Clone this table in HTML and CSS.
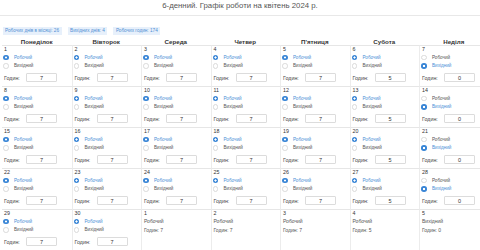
FILE: index.html
```html
<!DOCTYPE html>
<html lang="uk">
<head>
<meta charset="utf-8">
<title>Графік роботи</title>
<link rel="stylesheet" href="styles.css">
</head>
<body>
<h1 class="title">6-денний. Графік роботи на квітень 2024 р.</h1>
<div class="badges">
  <span class="badge">Робочих днів в місяці: 26</span>
  <span class="badge">Вихідних днів: 4</span>
  <span class="badge">Робочих годин: 174</span>
</div>
<div class="head">
  <div>Понеділок</div><div>Вівторок</div><div>Середа</div><div>Четвер</div><div>П'ятниця</div><div>Субота</div><div>Неділя</div>
</div>
<div class="grid">
  <div class="cell"><div class="num">1</div><label class="opt on"><input type="radio" name="d1" checked><span>Робочий</span></label><label class="opt"><input type="radio" name="d1"><span>Вихідний</span></label><div class="hrs"><span class="hl">Годин:</span><input class="hin" value="7"></div></div>
  <div class="cell"><div class="num">2</div><label class="opt on"><input type="radio" name="d2" checked><span>Робочий</span></label><label class="opt"><input type="radio" name="d2"><span>Вихідний</span></label><div class="hrs"><span class="hl">Годин:</span><input class="hin" value="7"></div></div>
  <div class="cell"><div class="num">3</div><label class="opt on"><input type="radio" name="d3" checked><span>Робочий</span></label><label class="opt"><input type="radio" name="d3"><span>Вихідний</span></label><div class="hrs"><span class="hl">Годин:</span><input class="hin" value="7"></div></div>
  <div class="cell"><div class="num">4</div><label class="opt on"><input type="radio" name="d4" checked><span>Робочий</span></label><label class="opt"><input type="radio" name="d4"><span>Вихідний</span></label><div class="hrs"><span class="hl">Годин:</span><input class="hin" value="7"></div></div>
  <div class="cell"><div class="num">5</div><label class="opt on"><input type="radio" name="d5" checked><span>Робочий</span></label><label class="opt"><input type="radio" name="d5"><span>Вихідний</span></label><div class="hrs"><span class="hl">Годин:</span><input class="hin" value="7"></div></div>
  <div class="cell"><div class="num">6</div><label class="opt on"><input type="radio" name="d6" checked><span>Робочий</span></label><label class="opt"><input type="radio" name="d6"><span>Вихідний</span></label><div class="hrs"><span class="hl">Годин:</span><input class="hin" value="5"></div></div>
  <div class="cell"><div class="num">7</div><label class="opt"><input type="radio" name="d7"><span>Робочий</span></label><label class="opt on"><input type="radio" name="d7" checked><span>Вихідний</span></label><div class="hrs"><span class="hl">Годин:</span><input class="hin" value="0"></div></div>

  <div class="cell"><div class="num">8</div><label class="opt on"><input type="radio" name="d8" checked><span>Робочий</span></label><label class="opt"><input type="radio" name="d8"><span>Вихідний</span></label><div class="hrs"><span class="hl">Годин:</span><input class="hin" value="7"></div></div>
  <div class="cell"><div class="num">9</div><label class="opt on"><input type="radio" name="d9" checked><span>Робочий</span></label><label class="opt"><input type="radio" name="d9"><span>Вихідний</span></label><div class="hrs"><span class="hl">Годин:</span><input class="hin" value="7"></div></div>
  <div class="cell"><div class="num">10</div><label class="opt on"><input type="radio" name="d10" checked><span>Робочий</span></label><label class="opt"><input type="radio" name="d10"><span>Вихідний</span></label><div class="hrs"><span class="hl">Годин:</span><input class="hin" value="7"></div></div>
  <div class="cell"><div class="num">11</div><label class="opt on"><input type="radio" name="d11" checked><span>Робочий</span></label><label class="opt"><input type="radio" name="d11"><span>Вихідний</span></label><div class="hrs"><span class="hl">Годин:</span><input class="hin" value="7"></div></div>
  <div class="cell"><div class="num">12</div><label class="opt on"><input type="radio" name="d12" checked><span>Робочий</span></label><label class="opt"><input type="radio" name="d12"><span>Вихідний</span></label><div class="hrs"><span class="hl">Годин:</span><input class="hin" value="7"></div></div>
  <div class="cell"><div class="num">13</div><label class="opt on"><input type="radio" name="d13" checked><span>Робочий</span></label><label class="opt"><input type="radio" name="d13"><span>Вихідний</span></label><div class="hrs"><span class="hl">Годин:</span><input class="hin" value="5"></div></div>
  <div class="cell"><div class="num">14</div><label class="opt"><input type="radio" name="d14"><span>Робочий</span></label><label class="opt on"><input type="radio" name="d14" checked><span>Вихідний</span></label><div class="hrs"><span class="hl">Годин:</span><input class="hin" value="0"></div></div>

  <div class="cell"><div class="num">15</div><label class="opt on"><input type="radio" name="d15" checked><span>Робочий</span></label><label class="opt"><input type="radio" name="d15"><span>Вихідний</span></label><div class="hrs"><span class="hl">Годин:</span><input class="hin" value="7"></div></div>
  <div class="cell"><div class="num">16</div><label class="opt on"><input type="radio" name="d16" checked><span>Робочий</span></label><label class="opt"><input type="radio" name="d16"><span>Вихідний</span></label><div class="hrs"><span class="hl">Годин:</span><input class="hin" value="7"></div></div>
  <div class="cell"><div class="num">17</div><label class="opt on"><input type="radio" name="d17" checked><span>Робочий</span></label><label class="opt"><input type="radio" name="d17"><span>Вихідний</span></label><div class="hrs"><span class="hl">Годин:</span><input class="hin" value="7"></div></div>
  <div class="cell"><div class="num">18</div><label class="opt on"><input type="radio" name="d18" checked><span>Робочий</span></label><label class="opt"><input type="radio" name="d18"><span>Вихідний</span></label><div class="hrs"><span class="hl">Годин:</span><input class="hin" value="7"></div></div>
  <div class="cell"><div class="num">19</div><label class="opt on"><input type="radio" name="d19" checked><span>Робочий</span></label><label class="opt"><input type="radio" name="d19"><span>Вихідний</span></label><div class="hrs"><span class="hl">Годин:</span><input class="hin" value="7"></div></div>
  <div class="cell"><div class="num">20</div><label class="opt on"><input type="radio" name="d20" checked><span>Робочий</span></label><label class="opt"><input type="radio" name="d20"><span>Вихідний</span></label><div class="hrs"><span class="hl">Годин:</span><input class="hin" value="5"></div></div>
  <div class="cell"><div class="num">21</div><label class="opt"><input type="radio" name="d21"><span>Робочий</span></label><label class="opt on"><input type="radio" name="d21" checked><span>Вихідний</span></label><div class="hrs"><span class="hl">Годин:</span><input class="hin" value="0"></div></div>

  <div class="cell"><div class="num">22</div><label class="opt on"><input type="radio" name="d22" checked><span>Робочий</span></label><label class="opt"><input type="radio" name="d22"><span>Вихідний</span></label><div class="hrs"><span class="hl">Годин:</span><input class="hin" value="7"></div></div>
  <div class="cell"><div class="num">23</div><label class="opt on"><input type="radio" name="d23" checked><span>Робочий</span></label><label class="opt"><input type="radio" name="d23"><span>Вихідний</span></label><div class="hrs"><span class="hl">Годин:</span><input class="hin" value="7"></div></div>
  <div class="cell"><div class="num">24</div><label class="opt on"><input type="radio" name="d24" checked><span>Робочий</span></label><label class="opt"><input type="radio" name="d24"><span>Вихідний</span></label><div class="hrs"><span class="hl">Годин:</span><input class="hin" value="7"></div></div>
  <div class="cell"><div class="num">25</div><label class="opt on"><input type="radio" name="d25" checked><span>Робочий</span></label><label class="opt"><input type="radio" name="d25"><span>Вихідний</span></label><div class="hrs"><span class="hl">Годин:</span><input class="hin" value="7"></div></div>
  <div class="cell"><div class="num">26</div><label class="opt on"><input type="radio" name="d26" checked><span>Робочий</span></label><label class="opt"><input type="radio" name="d26"><span>Вихідний</span></label><div class="hrs"><span class="hl">Годин:</span><input class="hin" value="7"></div></div>
  <div class="cell"><div class="num">27</div><label class="opt on"><input type="radio" name="d27" checked><span>Робочий</span></label><label class="opt"><input type="radio" name="d27"><span>Вихідний</span></label><div class="hrs"><span class="hl">Годин:</span><input class="hin" value="5"></div></div>
  <div class="cell"><div class="num">28</div><label class="opt"><input type="radio" name="d28"><span>Робочий</span></label><label class="opt on"><input type="radio" name="d28" checked><span>Вихідний</span></label><div class="hrs"><span class="hl">Годин:</span><input class="hin" value="0"></div></div>

  <div class="cell"><div class="num">29</div><label class="opt on"><input type="radio" name="d29" checked><span>Робочий</span></label><label class="opt"><input type="radio" name="d29"><span>Вихідний</span></label><div class="hrs"><span class="hl">Годин:</span><input class="hin" value="7"></div></div>
  <div class="cell"><div class="num">30</div><label class="opt on"><input type="radio" name="d30" checked><span>Робочий</span></label><label class="opt"><input type="radio" name="d30"><span>Вихідний</span></label><div class="hrs"><span class="hl">Годин:</span><input class="hin" value="7"></div></div>
  <div class="cell muted"><div class="num">1</div><div class="line">Робочий</div><div class="line">Годин: 7</div></div>
  <div class="cell muted"><div class="num">2</div><div class="line">Робочий</div><div class="line">Годин: 7</div></div>
  <div class="cell muted"><div class="num">3</div><div class="line">Робочий</div><div class="line">Годин: 7</div></div>
  <div class="cell muted"><div class="num">4</div><div class="line">Робочий</div><div class="line">Годин: 5</div></div>
  <div class="cell muted"><div class="num">5</div><div class="line">Вихідний</div><div class="line">Годин: 0</div></div>
</div>
</body>
</html>
```

FILE: styles.css
```css
html, body {
  margin: 0;
  padding: 0;
  overflow: hidden;
  background: #fff;
}
body {
  font-family: "Liberation Sans", Arial, sans-serif;
  color: #333;
  width: 480px;
}
.title {
  margin: 0;
  font-size: 7.8px;
  font-weight: normal;
  line-height: 12px;
  padding-bottom: 3px;
  text-align: center;
  color: #555;
  border-bottom: 1px solid #e8e8e8;
}
.badges {
  display: flex;
  gap: 6px;
  margin-top: 11px;
  padding-left: 2.5px;
}
.badge {
  display: block;
  height: 8px;
  line-height: 8px;
  font-size: 4.7px;
  padding: 0 2.5px;
  background: #e7f0fb;
  color: #4f8fd3;
}
.head {
  display: grid;
  grid-template-columns: repeat(7, 69.5px);
  margin-left: 2px;
  height: 10px;
}
.head div {
  text-align: center;
  font-weight: bold;
  font-size: 6.2px;
  line-height: 6px;
  padding-top: 4px;
  color: #333;
}
.grid {
  display: grid;
  grid-template-columns: repeat(7, 69.5px);
  grid-auto-rows: 41px;
  margin-left: 2px;
}
.cell {
  box-sizing: border-box;
  border-top: 1px solid #e6e6e6;
  padding: 0 2px;
  overflow: hidden;
}
.cell:not(:nth-child(7n+1)) {
  border-left: 1px solid #ececec;
}
.num {
  height: 7px;
  line-height: 7px;
  font-size: 5.3px;
  color: #333;
}
.opt {
  display: flex;
  align-items: center;
  height: 8.5px;
  font-size: 4.6px;
  color: #555;
}
.opt input {
  appearance: none;
  -webkit-appearance: none;
  box-sizing: border-box;
  width: 5.5px;
  height: 5.5px;
  margin: 0 5.5px 0 -1px;
  border: 1px solid #dadada;
  border-radius: 50%;
  background: #fff;
}
.opt input:checked {
  border: none;
  background: radial-gradient(circle, #fff 0 0.9px, #3a86d6 1.2px);
}
.opt.on {
  color: #4a8fd6;
}
.hrs {
  display: flex;
  align-items: center;
  margin-top: 3px;
  height: 9px;
}
.hl {
  width: 22px;
  font-size: 5.3px;
  color: #444;
}
.hin {
  box-sizing: border-box;
  width: 31px;
  height: 9px;
  padding: 0;
  margin: 0;
  border: 1px solid #dcdcdc;
  border-radius: 1px;
  font-family: "Liberation Sans", Arial, sans-serif;
  font-size: 5.5px;
  text-align: center;
  color: #333;
  background: #fff;
}
.muted .line {
  height: 9px;
  line-height: 9px;
  font-size: 5px;
  color: #555;
}
.muted .line:first-of-type {
  margin-top: 1px;
}
```
